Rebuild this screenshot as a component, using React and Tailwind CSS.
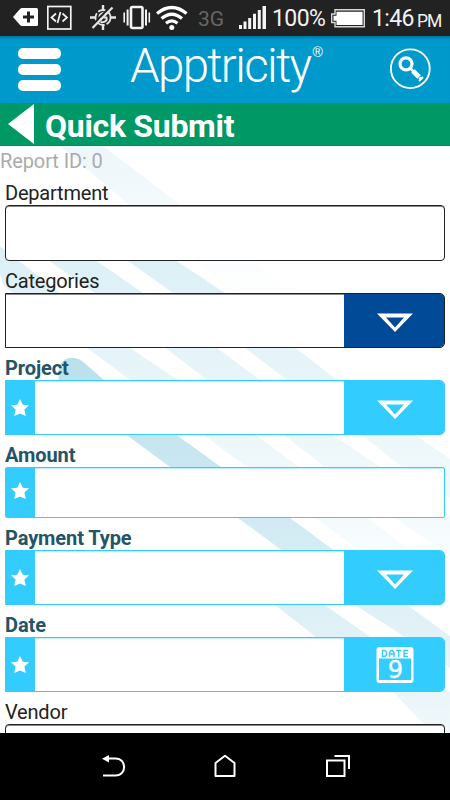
import clsx from 'clsx'

const fields = [
  { label: 'Department', type: 'text', height: 'h-14' },
  { label: 'Categories', type: 'select', height: 'h-[55px]' },
  { label: 'Project', type: 'select', required: true, height: 'h-[55px]' },
  { label: 'Amount', type: 'text', required: true, height: 'h-[51px]' },
  { label: 'Payment Type', type: 'select', required: true, height: 'h-[55px]' },
  { label: 'Date', type: 'date', required: true, height: 'h-[55px]' },
  { label: 'Vendor', type: 'text', height: 'h-14' },
]

// Pale diagonal bands behind the form
function Stripes() {
  return (
    <svg className="absolute inset-0 -z-10" width="450" height="587" viewBox="0 0 450 587" fill="none">
      <defs>
        <linearGradient id="s0" x1="0" y1="0" x2="0" y2="1">
          <stop stopColor="#edf6fa" />
          <stop offset="1" stopColor="#ffffff" />
        </linearGradient>
        <linearGradient id="s1" gradientUnits="userSpaceOnUse" x1="0" y1="80" x2="0" y2="400">
          <stop stopColor="#daeff6" />
          <stop offset="0.5" stopColor="#e8f5f9" />
          <stop offset="1" stopColor="#f7fcfd" />
        </linearGradient>
        <linearGradient id="s2" gradientUnits="userSpaceOnUse" x1="0" y1="210" x2="0" y2="587">
          <stop stopColor="#b9e0ed" />
          <stop offset="0.3" stopColor="#cae7f1" />
          <stop offset="0.6" stopColor="#daeef5" />
          <stop offset="1" stopColor="#f3f9fb" />
        </linearGradient>
        <linearGradient id="s3" gradientUnits="userSpaceOnUse" x1="0" y1="440" x2="0" y2="587">
          <stop stopColor="#d9eef5" />
          <stop offset="1" stopColor="#f1f8fb" />
        </linearGradient>
      </defs>
      <path d="M60 0H103L300 150H236Z" fill="url(#s0)" />
      <path d="M0 80L-10 100L4 140L90 204L130 234L205 290L315 372L360 404H410L368 372L257 290L178 234L130 202L0 100Z" fill="url(#s1)" />
      <path d="M28 100H75L143 147L260 234L335 290L450 370V410L395 372L325 321L285 290L207 234L95 147Z" fill="url(#s1)" />
      <path d="M107 100H154L225 147L337 234L417 290L450 313V352L402 321L363 290L287 234L173 147Z" fill="url(#s1)" />
      <path d="M59 234C55 214 70 207 82 215L104 234L178 290L221 321L290 372L332 403L407 459L450 490V522L405 491L355 459L280 403L238 372L170 321L128 290Z" fill="url(#s2)" />
      <path d="M248 438C246 424 258 417 268 420L325 459L370 491L450 546V587H433L393 546L316 491Z" fill="url(#s3)" />
    </svg>
  )
}

function StatusBar() {
  return (
    <div className="flex h-9 shrink-0 items-center overflow-hidden bg-[#222222] text-[#f2f2f2]">
      <svg className="ml-[13px] shrink-0" width="25" height="36" viewBox="13 0 25 36">
        <path d="M13 17L20 9Q21 8 22 8H36.500Q38 8 38 9.500V24.500Q38 26 36.500 26H22Q21 26 20 25Z" fill="#fff" />
        <path d="M28.500 11.500V22.500M23 17H34" stroke="#222" strokeWidth="3" />
      </svg>
      <svg className="ml-[9px] shrink-0" width="25" height="36" viewBox="47 0 25 36" fill="none" stroke="#f4f4f4">
        <rect x="47.800" y="6.500" width="23" height="22.500" strokeWidth="1.700" />
        <path d="M56 13.500L51.500 17.500L56 21.500M62.500 13.500L67 17.500L62.500 21.500M60.500 12L57.500 23" strokeWidth="1.700" />
      </svg>
      <svg className="ml-[17px] shrink-0" width="28" height="36" viewBox="89 0 28 36" fill="none" stroke="#e6e6e6">
        <circle cx="103" cy="17.500" r="7.500" strokeWidth="1.800" strokeDasharray="8 2" />
        <path d="M103 5V10M103 25V30M90 17.500H95.500M110.500 17.500H116" strokeWidth="2.400" />
        <path d="M106.500 14C104 11.500 99 13.500 99.500 17.500Q100 19.500 102 19.500M100.500 22C105.500 23 107.500 20 106.500 17.500H103.500" strokeWidth="2" />
        <path d="M91.500 26L111.500 5.500" stroke="#222" strokeWidth="2" />
        <path d="M92.500 28L112.500 7.500" strokeWidth="2.200" />
      </svg>
      <svg className="ml-[6px] shrink-0" width="28" height="36" viewBox="123 0 28 36" fill="none" stroke="#f4f4f4">
        <rect x="131" y="7" width="11.500" height="21" rx="1.500" strokeWidth="2.600" />
        <path d="M127.600 9.500V25.500M146 9.500V25.500" strokeWidth="2" />
        <path d="M124.200 12.500V22.500M149.300 12.500V22.500" strokeWidth="1.600" />
      </svg>
      <svg className="ml-[5px] shrink-0" width="32" height="36" viewBox="156 0 32 36" fill="none" stroke="#fff" strokeWidth="3.200">
        <path d="M157 13.500Q171.800 1.500 186.600 13.500M161.500 18.500Q171.800 10 182 18.500M166 23.300Q171.800 18.500 177.500 23.300" />
        <circle cx="171.800" cy="27.500" r="2.500" fill="#fff" stroke="none" />
      </svg>
      <span className="ml-[10px] mt-px w-[29px] text-[21px] leading-9 text-[#666666]">3G</span>
      <svg className="ml-[12px] shrink-0" width="27" height="36" viewBox="239 0 27 36" fill="#f4f4f4">
        <path d="M239 25h3v4h-3zM243.500 21.500h3v7.500h-3zM248.200 18h3v11h-3zM253 13.800h3v15.200h-3zM257.800 10h3v19h-3zM262.500 6h3.500v23h-3.500z" />
      </svg>
      <span className="ml-[6px] mt-[2px] w-[54px] whitespace-nowrap text-[23px] leading-9 tracking-[-0.6px]">100%</span>
      <svg className="ml-[5px] shrink-0" width="34" height="36" viewBox="331 0 34 36">
        <path d="M335 9.700H364.300V26.800H335V22.500H331.700V14H335Z" fill="none" stroke="#d8d8d8" strokeWidth="1.400" />
        <path d="M336.500 11.700H362.600V25H336.500V20.800H333.500V15.800H336.500Z" fill="#fff" />
      </svg>
      <span className="ml-[7px] mt-[2px] w-[45px] whitespace-nowrap text-[23px] leading-9 tracking-[-0.6px]">1:46</span>
      <span className="mt-[5px] text-[17.500px] leading-9 tracking-[-1px]">PM</span>
    </div>
  )
}

function Header() {
  return (
    <header className="flex h-[67px] shrink-0 items-start bg-[#0099cc] shadow-[inset_0_3px_2px_-1px_rgba(0,0,0,0.2)]">
      <div className="ml-[18px] mt-3 flex w-[43px] flex-col gap-[5px]">
        <span className="h-[11px] rounded-[5px] bg-white" />
        <span className="h-[11px] rounded-[5px] bg-white" />
        <span className="h-[11px] rounded-[5px] bg-white" />
      </div>
      <div className="ml-[69px] flex w-[200px] text-white">
        <span className="-mt-px whitespace-nowrap text-[47.500px] font-light leading-[62px] tracking-[-1.700px]">Apptricity</span>
        <span className="ml-[2px] mt-[6px] font-['Liberation_Sans',sans-serif] text-[14px] leading-5">®</span>
      </div>
      <svg className="ml-[60px] mt-3" width="41" height="41" viewBox="390 48 41 41" fill="none" stroke="#fff">
        <circle cx="410.300" cy="68.700" r="19.400" strokeWidth="1.800" />
        <circle cx="406" cy="63.800" r="6" strokeWidth="3.200" />
        <path d="M410.500 68.500L413.500 71.500" strokeWidth="2.500" />
        <path d="M413 71L419 77" strokeWidth="5" />
        <path d="M419.500 77.500L421.500 79.500" strokeWidth="3" />
        <path d="M419 81L423 77" strokeWidth="1.800" />
      </svg>
    </header>
  )
}

function ActionIcon({ type }) {
  if (type === 'date') {
    return (
      <svg width="38" height="36" viewBox="0 0 38 36">
        <rect x="0.500" y="0" width="37" height="36" rx="3" fill="#fff" />
        <rect x="3" y="11.500" width="32" height="21.500" fill="#33ccff" />
        <path d="M6.500 3.500h2.500l1.500 1.500v3l-1.500 1.500h-2.500zM13.500 10v-4.500l1.500-2h1.500l1.500 2v4.500M13.500 7h4.500M20 3.500h5.500M22.700 3.500v6.500M32 3.500h-4v6h4M28 6.500h3.500" fill="none" stroke="#33ccff" strokeWidth="1.400" />
        <text x="19.500" y="31" textAnchor="middle" fill="#fff" stroke="#fff" strokeWidth="0.300" className="font-['DejaVu_Sans',sans-serif] text-[24px]">
          9
        </text>
      </svg>
    )
  }
  return (
    <svg className="mt-[4px]" width="36" height="20" viewBox="0 0 36 20">
      <path d="M0 0.500H36L18 19Z M9 4.500L18 14.500L27 4.500Z" fill="#fff" fillRule="evenodd" />
    </svg>
  )
}

function Field({ label, type, required, height }) {
  const hasAction = type !== 'text'
  return (
    <div>
      <div
        className={clsx(
          'flex h-8 items-center whitespace-nowrap pt-[7px] text-[20px] leading-6',
          required ? 'font-bold text-[#235467] tracking-[-0.1px]' : 'text-[#222222] tracking-[-0.200px]',
        )}
      >
        {label}
      </div>
      <div
        className={clsx(
          'flex overflow-hidden border bg-white',
          height,
          hasAction && 'rounded-r-[5px]',
          !hasAction && (required ? 'rounded-[2px]' : 'rounded-[4px]'),
          required ? 'border-[#33ccff] shadow-[inset_0_1px_0_#c2efff]' : 'border-[#222222] shadow-[inset_0_1px_0_#888888]',
        )}
      >
        {required && (
          <div className={clsx('flex w-[29px] shrink-0 items-center justify-center bg-[#33ccff] pr-px', label === 'Amount' && 'pb-1')}>
            <svg width="18" height="17" viewBox="0 0 18 17" fill="#fff">
              <path d="M9 0L11.800 5.800L18 6.300L13.400 10.600L14.800 17L9 14.500L3.200 17L4.600 10.600L0 6.300L6.200 5.800Z" />
            </svg>
          </div>
        )}
        <div className="flex-1" />
        {hasAction && (
          <div className={clsx('-my-px -mr-px flex w-[101px] items-center justify-center', required ? 'bg-[#33ccff]' : 'bg-[#004a98]')}>
            <ActionIcon type={type} />
          </div>
        )}
      </div>
    </div>
  )
}

function NavBar() {
  return (
    <nav className="flex h-[67px] shrink-0 items-start bg-black">
      <svg className="ml-[102px] mt-[22px]" width="24" height="23" viewBox="102 755 24 23" fill="none" stroke="#fff" strokeWidth="2">
        <path d="M107 758.500H115.500C127 758.500 127 775.500 115.500 775.500H103" />
        <path d="M102 758.700L109 755V762.500Z" fill="#fff" stroke="none" />
      </svg>
      <svg className="ml-[88px] mt-[22px]" width="22" height="23" viewBox="214 755 22 23" fill="none" stroke="#fff" strokeWidth="2">
        <path d="M215.500 776V763L225 755.800L234.500 763V776Z" strokeLinejoin="round" />
      </svg>
      <svg className="ml-[90px] mt-[22px]" width="24" height="23" viewBox="326 755 24 23" fill="none" stroke="#fff" strokeWidth="2">
        <rect x="327" y="760.500" width="17.500" height="15.500" />
        <path d="M334.500 756H349V769" />
      </svg>
    </nav>
  )
}

export default function App() {
  return (
    <div className="flex h-[800px] w-[450px] flex-col overflow-hidden bg-white font-[Roboto,sans-serif]">
      <StatusBar />
      <Header />
      <div className="flex h-[43px] shrink-0 items-center border-b border-[#088a5c] bg-[#009966] text-white">
        <svg className="ml-2 shrink-0" width="26" height="40" viewBox="0 0 26 40">
          <path d="M0 20L26 0V40Z" fill="#fff" />
        </svg>
        <h1 className="ml-[11px] mt-[3px] whitespace-nowrap text-[32px] font-bold leading-10 tracking-[-0.300px]">Quick Submit</h1>
      </div>
      <main className="relative isolate min-h-0 flex-1 overflow-hidden">
        <Stripes />
        <div className="h-[27px] pt-px text-[20px] leading-[29px] tracking-[-0.100px] text-[#aaaaaa]">Report ID: 0</div>
        <div className="flex flex-col px-[5px]">
          {fields.map((field) => (
            <Field key={field.label} {...field} />
          ))}
        </div>
      </main>
      <NavBar />
    </div>
  )
}
